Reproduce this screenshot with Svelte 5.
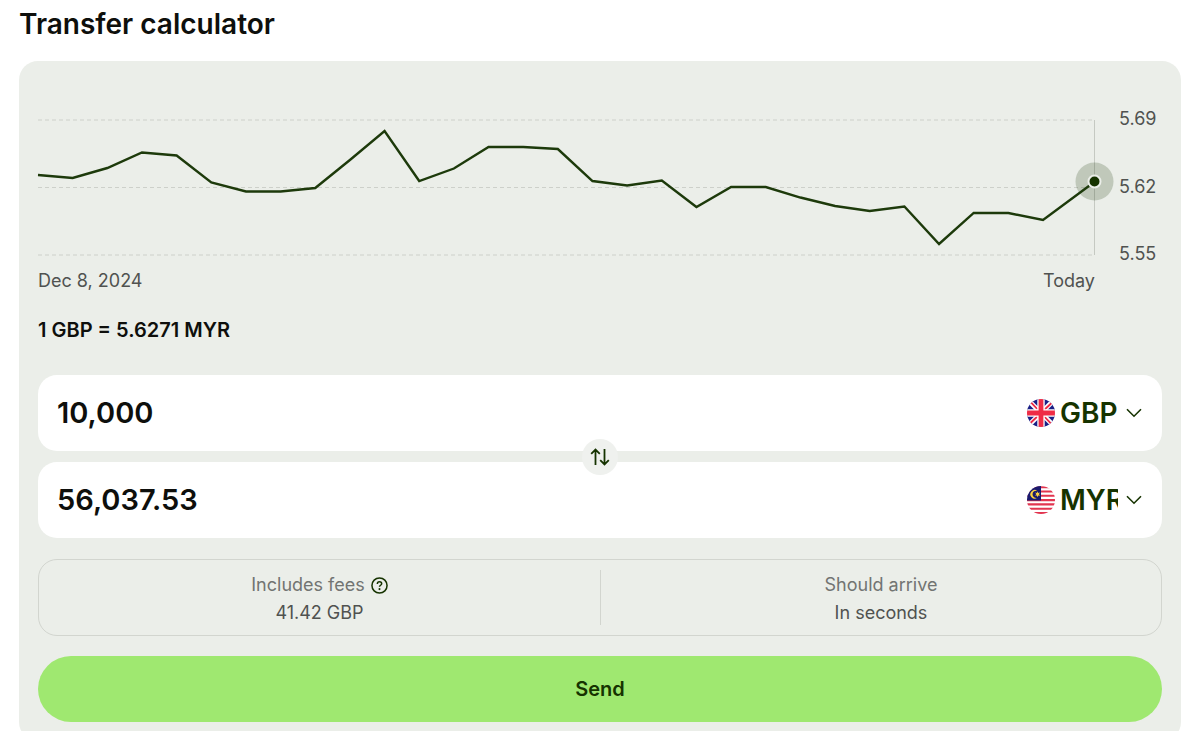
<script>
  const rates = [
    5.633, 5.6299, 5.6402, 5.6563, 5.6532, 5.6252, 5.6159, 5.6159, 5.6195, 5.6485,
    5.6786, 5.6267, 5.6397, 5.662, 5.662, 5.6599, 5.6267, 5.6221, 5.6273, 5.5998,
    5.6205, 5.6205, 5.6096, 5.6008, 5.5956, 5.6003, 5.5614, 5.5936, 5.5936, 5.5863
  ];
  const latest = 5.6262;
  const ticks = [5.69, 5.62, 5.55];
  const plotHeight = 135;

  let plotWidth = $state(0);
  let amount = $state("10,000");
  let received = $state("56,037.53");
  let source = $state("GBP");
  let target = $state("MYR");

  const y = rate => ((ticks[0] - rate) / (ticks[0] - ticks[2])) * plotHeight;

  // the last point sits one and a half days after the previous one
  let step = $derived(plotWidth / (rates.length + 0.5));
  let line = $derived(
    [...rates.map((rate, i) => `${i * step},${y(rate)}`), `${plotWidth},${y(latest)}`].join(" ")
  );

  const swap = () => {
    [source, target] = [target, source];
    [amount, received] = [received, amount];
  };
</script>

{#snippet flag(code)}
  <svg class="flag" viewBox="0 0 28 28" aria-hidden="true">
    <clipPath id="round-{code}"><circle cx="14" cy="14" r="14" /></clipPath>
    <g clip-path="url(#round-{code})">
      {#if code === "GBP"}
        <rect width="28" height="28" fill="#1a1f85" />
        <path d="M2 2 26 26M26 2 2 26" stroke="#fff" stroke-width="4.6" />
        <path d="M14 14 3 2.4M14 14 25 25.6M14 14 2.4 25M14 14 25.6 3" stroke="#ef2b45" stroke-width="1.8" />
        <path d="M14 0V28M0 14H28" stroke="#fff" stroke-width="7.4" />
        <path d="M14 0V28M0 14H28" stroke="#ef2b45" stroke-width="4.8" />
      {:else}
        <rect width="28" height="28" fill="#fff" />
        <path
          d="M0 1.2H28M0 5.5H28M0 9.8H28M0 14.1H28M0 18.4H28M0 22.7H28M0 27H28"
          stroke="#e2344f"
          stroke-width="2.1"
        />
        <rect width="14" height="14.5" fill="#1a1a6e" />
        <path d="M10.3 4.9A4.3 4.3 0 1 0 10.3 11.7A3.6 3.6 0 1 1 10.3 4.9Z" fill="#ffd23c" />
        <path
          d="M10.6 5.3 11.2 7.1 13 6.6 11.9 8.2 13.2 9.6 11.3 9.5 10.6 11.3 9.9 9.5 8 9.6 9.3 8.2 8.2 6.6 10 7.1Z"
          fill="#ffd23c"
        />
      {/if}
    </g>
  </svg>
{/snippet}

{#snippet chevron()}
  <svg class="chevron" viewBox="0 0 16 10" aria-hidden="true">
    <path d="M1 1.2 8 8.2 15 1.2" />
  </svg>
{/snippet}

<main>
  <h1>Transfer calculator</h1>

  <form class="panel" onsubmit={evt => evt.preventDefault()}>
    <div class="chart">
      <div class="plot">
        <div class="canvas" bind:clientWidth={plotWidth}>
          <svg width={plotWidth} height={plotHeight} role="img" aria-label="Exchange rate history">
            {#each ticks as tick}
              <line class="grid" x1="0" x2={plotWidth} y1={y(tick)} y2={y(tick)} />
            {/each}
            <line class="cursor" x1={plotWidth - 0.5} x2={plotWidth - 0.5} y1="0" y2={plotHeight} />
            <circle class="halo" cx={plotWidth - 0.5} cy={y(latest)} r="19" />
            <polyline class="line" points={line} />
            <circle class="dot" cx={plotWidth - 0.5} cy={y(latest)} r="6" />
          </svg>
        </div>
        <div class="dates">
          <span>Dec 8, 2024</span>
          <span>Today</span>
        </div>
      </div>
      <div class="axis">
        {#each ticks as tick}
          <span>{tick}</span>
        {/each}
      </div>
    </div>

    <p class="rate">1 GBP = 5.6271 MYR</p>

    <div class="fields">
      <div class="field">
        <input type="text" inputmode="decimal" aria-label="You send" bind:value={amount} />
        <label class="currency">
          {@render flag(source)}
          <select aria-label="Source currency" bind:value={source}>
            <option>GBP</option>
            <option>MYR</option>
          </select>
          {@render chevron()}
        </label>
      </div>
      <button class="swap" type="button" aria-label="Swap currencies" onclick={swap}>
        <svg viewBox="0 0 20 18" aria-hidden="true">
          <path d="M5.5 17V1.5M1.2 5.8 5.5 1.5 9.8 5.8M14.5 1V16.5M10.2 12.2 14.5 16.5 18.8 12.2" />
        </svg>
      </button>
      <div class="field">
        <input type="text" inputmode="decimal" aria-label="Recipient gets" bind:value={received} />
        <label class="currency">
          {@render flag(target)}
          <select aria-label="Target currency" bind:value={target}>
            <option>GBP</option>
            <option>MYR</option>
          </select>
          {@render chevron()}
        </label>
      </div>
    </div>

    <dl class="details">
      <div>
        <dt>
          Includes fees
          <button class="help" type="button" aria-label="About fees">
            <svg viewBox="0 0 18 18" aria-hidden="true">
              <circle cx="9" cy="9" r="8" />
              <path d="M6.7 7.3C6.7 5.8 7.6 5 9 5S11.3 5.8 11.3 7.1C11.3 8.7 9 8.8 9 10.4" />
              <circle class="point" cx="9" cy="12.8" r="1.1" />
            </svg>
          </button>
        </dt>
        <dd>41.42 GBP</dd>
      </div>
      <div>
        <dt>Should arrive</dt>
        <dd>In seconds</dd>
      </div>
    </dl>

    <button class="send" type="submit">Send</button>
  </form>
</main>

<style>
  :global(body) {
    margin: 0;
    background: #fff;
  }

  main {
    --ink: #0e0f0c;
    --forest: #163300;
    --text: #505250;
    --muted: #727472;
    --panel: #ebeee9;
    --border: #d2d5cf;
    --green: #9fe870;
    padding: 5px 19px 19px;
    color: var(--ink);
    font-family: Inter, "Liberation Sans", sans-serif;
    font-size: 18px;
    line-height: 22px;
  }

  h1 {
    margin: 0 0 18px;
    font-size: 28px;
    line-height: 38px;
    font-weight: 600;
  }

  .panel {
    padding: 47px 19px 19px;
    border-radius: 19px;
    background: var(--panel);
  }

  .chart {
    display: flex;
    align-items: flex-start;
    gap: 24px;
    color: var(--text);
  }

  .plot {
    flex: 1;
    min-width: 0;
    padding-top: 12px;
  }

  .canvas {
    height: 135px;
  }

  .canvas svg {
    display: block;
    overflow: visible;
  }

  .grid {
    stroke: #cdd0ca;
    stroke-dasharray: 4 3;
  }

  .cursor {
    stroke: #c5c9c2;
  }

  .halo {
    fill: rgba(22, 51, 0, 0.2);
  }

  .line {
    fill: none;
    stroke: #1d3a0b;
    stroke-width: 2.4;
  }

  .dot {
    fill: var(--forest);
    stroke: var(--panel);
    stroke-width: 2;
  }

  .dates {
    display: flex;
    justify-content: space-between;
    margin-top: 15px;
  }

  .axis {
    display: flex;
    flex-direction: column;
    justify-content: space-between;
    width: 43px;
    height: 157px;
  }

  .rate {
    margin: 26px 0 33px;
    font-size: 20px;
    line-height: 24px;
    font-weight: 600;
  }

  .fields {
    position: relative;
    display: grid;
    gap: 11px;
  }

  .field {
    display: flex;
    align-items: center;
    height: 76px;
    padding: 0 20px 0 19px;
    box-sizing: border-box;
    border-radius: 19px;
    background: #fff;
  }

  input,
  select {
    padding: 0;
    border: 0;
    background: none;
    font: inherit;
    line-height: 38px;
    font-weight: 600;
  }

  input {
    flex: 1;
    min-width: 0;
    color: var(--ink);
    font-size: 29px;
  }

  select {
    appearance: none;
    width: 58px;
    margin: 0 8px 0 5px;
    color: var(--forest);
    font-size: 28px;
  }

  .currency {
    display: flex;
    align-items: center;
  }

  .flag {
    width: 28px;
    height: 28px;
  }

  .chevron {
    width: 16px;
    height: 10px;
    pointer-events: none;
  }

  .chevron path,
  .swap path,
  .help svg {
    fill: none;
    stroke: var(--forest);
    stroke-width: 1.6;
  }

  .swap {
    position: absolute;
    top: 50%;
    left: 50%;
    display: grid;
    place-items: center;
    width: 36px;
    height: 36px;
    padding: 0;
    border: 0;
    border-radius: 50%;
    background: #eff1ee;
    transform: translate(-50%, -50%);
  }

  .swap svg {
    width: 20px;
    height: 18px;
  }

  .swap path {
    stroke-width: 1.8;
  }

  .details {
    display: grid;
    grid-template-columns: 1fr 1fr;
    margin: 21px 0 20px;
    padding: 10px 0;
    border: 1px solid var(--border);
    border-radius: 19px;
    text-align: center;
  }

  .details div {
    display: grid;
    gap: 6px;
    padding: 4px 0 1px;
  }

  .details div + div {
    border-left: 1px solid var(--border);
  }

  dt {
    display: flex;
    justify-content: center;
    align-items: center;
    gap: 6px;
    color: var(--muted);
  }

  dd {
    margin: 0;
    color: var(--text);
  }

  .help {
    display: grid;
    padding: 0;
    border: 0;
    background: none;
  }

  .help svg {
    width: 17px;
    height: 17px;
  }

  .help .point {
    fill: var(--forest);
    stroke: none;
  }

  .send {
    display: block;
    width: 100%;
    height: 66px;
    border: 0;
    border-radius: 33px;
    background: var(--green);
    color: var(--forest);
    font: inherit;
    font-size: 20px;
    font-weight: 600;
  }
</style>
